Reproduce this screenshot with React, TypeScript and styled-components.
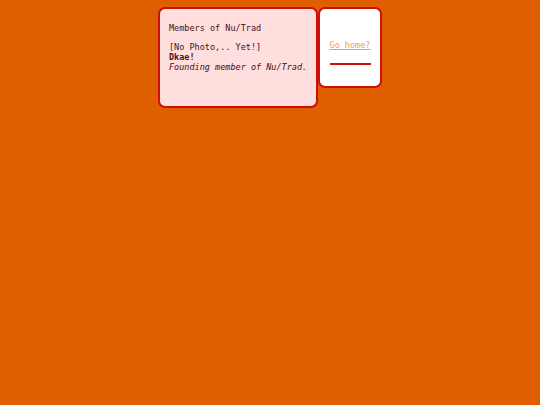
import React from 'react'
import styled, { createGlobalStyle } from 'styled-components'

const GlobalStyle = createGlobalStyle`
  html, body {
    margin: 0;
    padding: 0;
    background: #df5f00;
    height: 100%;
  }
  body {
    font-family: "DejaVu Sans Mono", "Liberation Mono", monospace;
    font-size: 8.5px;
    line-height: 10px;
    color: #4a1010;
  }
`

const Page = styled.div`
  display: flex;
  justify-content: center;
  align-items: flex-start;
  padding-top: 7px;
`

const Card = styled.div<{ $bg: string; $w: number; $h: number }>`
  box-sizing: border-box;
  width: ${({ $w }) => $w}px;
  height: ${({ $h }) => $h}px;
  background: ${({ $bg }) => $bg};
  border: 2px solid #cc1010;
  border-radius: 7px;
`

const Members = styled(Card)`
  padding: 14px 9px 0 9px;
`

const Heading = styled.div`
  margin-bottom: 9px;
`

const Line = styled.div<{ $bold?: boolean; $italic?: boolean }>`
  font-weight: ${({ $bold }) => ($bold ? 'bold' : 'normal')};
  font-style: ${({ $italic }) => ($italic ? 'italic' : 'normal')};
  white-space: nowrap;
`

const Nav = styled(Card)`
  display: flex;
  flex-direction: column;
  align-items: center;
  padding-top: 31px;
`

const HomeLink = styled.a`
  color: #f0a040;
  text-decoration: underline;
  white-space: nowrap;
`

const Rule = styled.div`
  width: 41px;
  height: 2px;
  background: #cc1010;
  margin-top: 13px;
`

export default function App() {
  return (
    <>
      <GlobalStyle />
      <Page>
        <Members $bg="#ffdede" $w={160} $h={101}>
          <Heading>Members of Nu/Trad</Heading>
          <Line>[No Photo,.. Yet!]</Line>
          <Line $bold>Dkae!</Line>
          <Line $italic>Founding member of Nu/Trad.</Line>
        </Members>
        <Nav $bg="#ffffff" $w={64} $h={81}>
          <HomeLink href="#">Go home?</HomeLink>
          <Rule />
        </Nav>
      </Page>
    </>
  )
}
